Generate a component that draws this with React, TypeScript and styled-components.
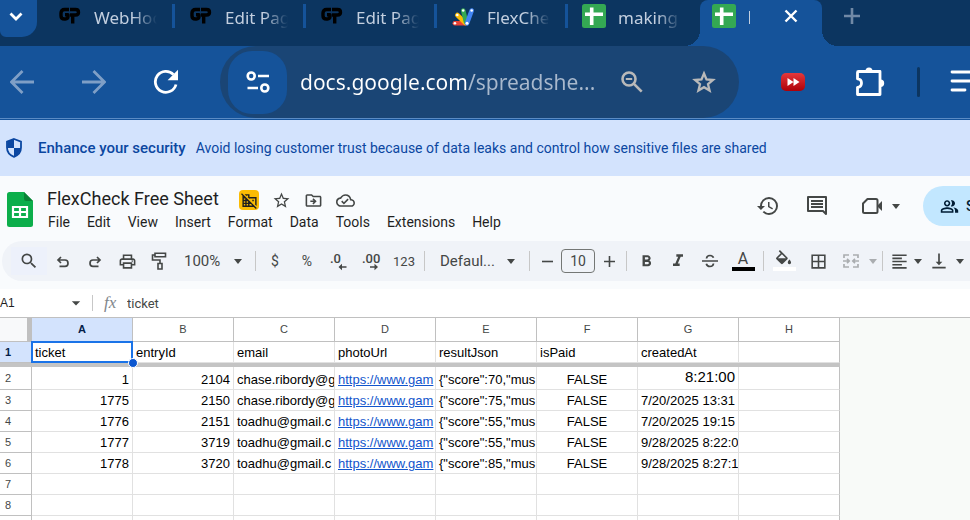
import React from 'react';
import styled, { createGlobalStyle } from 'styled-components';
import {
  MdArrowDropDown,
  MdBorderAll,
  MdDomainDisabled,
  MdFormatAlignLeft,
  MdFormatBold,
  MdFormatItalic,
  MdHistory,
  MdOutlineCloudDone,
  MdOutlineDriveFileMove,
  MdOutlinePeopleAlt,
  MdOutlinePrint,
  MdSearch,
  MdVerticalAlignBottom,
  MdStarBorder,
} from 'react-icons/md';

const GlobalStyle = createGlobalStyle`
  *, *::before, *::after { box-sizing: border-box; }
  body { margin: 0; background: #f9fbfd; }
  button, input, select { font: inherit; color: inherit; }
  button { border: 0; padding: 0; background: none; cursor: pointer; }
  svg { display: block; flex: none; }
`;

const chromeFont = '"Noto Sans", "Open Sans", sans-serif';
const appFont = 'Roboto, Arial, sans-serif';
const cellFont = '"Liberation Sans", Arial, sans-serif';

const Page = styled.div`
  display: flex;
  flex-direction: column;
  height: 100vh;
  overflow: hidden;
  font-family: ${appFont};
  color: #1f1f1f;
`;

/* ---------- Browser tabs ---------- */

const TabStrip = styled.div`
  display: flex;
  flex: none;
  height: 46px;
  background: #0c3560;
  font: 17px/24px ${chromeFont};
  color: #c3cfdf;
`;

const TabSearch = styled.button`
  display: flex;
  align-items: center;
  justify-content: flex-end;
  flex: none;
  width: 37px;
  height: 37px;
  margin-right: 7px;
  padding: 0 14px 5px 0;
  border-radius: 0 0 15px 6px;
  background: #15539a;
`;

const Tab = styled.button`
  display: flex;
  align-items: center;
  flex: none;
  gap: 12px;
  width: 131px;
  height: 32px;
  padding-left: 14px;
`;

const TabTitle = styled.span`
  flex: 1;
  overflow: hidden;
  text-align: left;
  white-space: nowrap;
  padding-top: 3px;
  mask-image: linear-gradient(to right, #000 62%, transparent 100%);
`;

const TabDivider = styled.i<{ $hidden?: boolean }>`
  width: 3px;
  height: 24px;
  margin-left: 3px;
  background: ${(p) => (p.$hidden ? 'transparent' : '#15539a')};
`;

const ActiveTab = styled.div`
  position: relative;
  display: flex;
  align-items: flex-start;
  flex: none;
  width: 122px;
  height: 46px;
  margin-left: 1px;
  padding: 4px 24px 0 12px;
  border-radius: 8px 8px 0 0;
  background: #15539a;
  &::before, &::after {
    content: '';
    position: absolute;
    bottom: 0;
    width: 16px;
    height: 16px;
  }
  &::before {
    right: 100%;
    background: radial-gradient(circle at 0 0, transparent 16px, #15539a 16px);
  }
  &::after {
    left: 100%;
    background: radial-gradient(circle at 100% 0, transparent 16px, #15539a 16px);
  }
`;

const TitleSliver = styled.i`
  width: 1px;
  height: 13px;
  margin: 7px 0 0 13px;
  background: #c3cfdf;
`;

const CloseTab = styled.button`
  margin: 5px 0 0 auto;
`;

const NewTab = styled.button`
  display: flex;
  align-items: flex-start;
  margin-left: 22px;
  padding-top: 8px;
`;

/* ---------- Browser toolbar ---------- */

const NavBar = styled.div`
  display: flex;
  align-items: center;
  flex: none;
  height: 74px;
  background: #15539a;
  border-bottom: 1px solid #15539a;
  box-shadow: inset 0 -1px 0 #5a8bc4;
  padding-bottom: 1px;
  overflow: hidden;
`;

const NavButton = styled.button<{ $w?: number; $dim?: boolean }>`
  display: flex;
  align-items: center;
  justify-content: center;
  flex: none;
  width: ${(p) => p.$w ?? 72}px;
  height: 48px;
  color: ${(p) => (p.$dim ? '#7f9fc6' : '#fff')};
`;

const Omnibox = styled.div`
  display: flex;
  align-items: center;
  flex: 1;
  min-width: 0;
  height: 72px;
  margin-left: 32px;
  padding-left: 8px;
  border-radius: 36px;
  background: #1a4575;
`;

const OmniboxIcon = styled(NavButton)`
  color: #b9b9b9;
`;

const SiteInfo = styled.button`
  display: flex;
  align-items: center;
  justify-content: center;
  flex: none;
  width: 59px;
  height: 63px;
  margin-right: 13px;
  border-radius: 24px;
  background: #15539a;
`;

const Address = styled.input`
  flex: 1;
  min-width: 0;
  padding: 0;
  border: 0;
  outline: 0;
  font: 21px/32px ${chromeFont};
  color: transparent;
  background: linear-gradient(to right, #fff 168px, #a9b9cd 168px);
  background-clip: text;
  -webkit-background-clip: text;
`;

const NavDivider = styled.i`
  flex: none;
  width: 3px;
  height: 30px;
  margin: 0 30px 0 24px;
  border-radius: 2px;
  background: #0c3560;
`;

const MediaButton = styled(NavButton)`
  justify-content: flex-start;
  overflow: hidden;
`;

/* ---------- Security banner ---------- */

const Banner = styled.div`
  display: flex;
  align-items: center;
  flex: none;
  height: 56px;
  padding-left: 6px;
  background: #d3e3fd;
  color: #0b47a1;
  font-size: 14px;
  white-space: nowrap;
`;

const BannerTitle = styled.strong`
  margin: 0 10px 0 16px;
  font-size: 15px;
  font-weight: 500;
`;

/* ---------- Document header ---------- */

const DocHeader = styled.header`
  display: flex;
  align-items: flex-start;
  flex: none;
  height: 65px;
  padding: 10px 0 0 7px;
  background: #f9fbfd;
`;

const LogoSlot = styled.div`
  flex: none;
  padding-top: 6px;
`;

const DocInfo = styled.div`
  flex: 1;
  min-width: 0;
  margin-left: 14px;
`;

const TitleRow = styled.div`
  display: flex;
  align-items: center;
  height: 25px;
  color: #444746;
`;

const DocTitle = styled.input`
  width: 178px;
  height: 26px;
  padding: 0;
  border: 0;
  background: none;
  font-size: 18px;
  color: #1f1f1f;
`;

const OrgBadge = styled.button`
  display: flex;
  align-items: center;
  justify-content: center;
  width: 20px;
  height: 20px;
  margin: 3px 6px 0 14px;
  border-radius: 4px;
  background: #fbbc04;
  color: #1f1f1f;
`;

const TitleAction = styled.button`
  display: flex;
  justify-content: center;
  width: 32px;
  padding-top: 3px;
`;

const MenuBar = styled.nav`
  display: flex;
  gap: 17px;
  padding-left: 1px;
  font-size: 14px;
  line-height: 22px;
`;

const HeaderButton = styled.button`
  display: flex;
  align-items: center;
  justify-content: center;
  flex: none;
  width: 49px;
  height: 40px;
  color: #444746;
`;

const MeetButton = styled(HeaderButton)`
  gap: 8px;
  width: 70px;
  margin-right: 12px;
  padding-left: 9px;
`;

const ShareButton = styled.button`
  display: flex;
  align-items: center;
  flex: none;
  gap: 7px;
  width: 47px;
  height: 40px;
  padding-left: 17px;
  overflow: hidden;
  border-radius: 20px 0 0 20px;
  background: #c2e7ff;
  color: #001d35;
  font-size: 14px;
  font-weight: 500;
`;

/* ---------- Formatting toolbar ---------- */

const ToolBand = styled.div`
  flex: none;
  height: 48px;
  padding-left: 2px;
  background: #f9fbfd;
`;

const ToolBar = styled.div`
  display: flex;
  align-items: center;
  height: 40px;
  padding-left: 9px;
  border-radius: 20px 0 0 20px;
  background: #f0f3f8;
  color: #444746;
  font-size: 14px;
  overflow: hidden;
`;

const Tool = styled.button<{ $w?: number; $faded?: boolean; $lit?: boolean }>`
  display: flex;
  align-items: center;
  justify-content: center;
  flex: none;
  width: ${(p) => p.$w ?? 32}px;
  height: 28px;
  opacity: ${(p) => (p.$faded ? 0.4 : 1)};
  background: ${(p) => (p.$lit ? '#edf1fb' : 'transparent')};
`;

const TextTool = styled(Tool)<{ $small?: boolean }>`
  font-size: ${(p) => (p.$small ? 13 : 14)}px;
`;

const ColorTool = styled(Tool)<{ $gap?: number }>`
  flex-direction: column;
  justify-content: flex-end;
  gap: ${(p) => p.$gap ?? 0}px;
  padding-bottom: 4px;
  line-height: 16px;
  font-size: 16px;
`;

const Swatch = styled.i<{ $color: string }>`
  width: 23px;
  height: 4px;
  background: ${(p) => p.$color};
`;

const ToolDivider = styled.i`
  flex: none;
  width: 1px;
  height: 20px;
  margin: 0 3px;
  background: #c7c7c7;
`;

const SelectWrap = styled.label<{ $w: number; $pad: number }>`
  display: flex;
  align-items: center;
  flex: none;
  width: ${(p) => p.$w}px;
  padding-left: ${(p) => p.$pad}px;
`;

const PlainSelect = styled.select<{ $w: number }>`
  appearance: none;
  flex: none;
  width: ${(p) => p.$w}px;
  padding: 0;
  border: 0;
  background: none;
  font-size: 15px;
`;

const SizeInput = styled.input`
  flex: none;
  width: 34px;
  height: 24px;
  padding: 0;
  border: 1px solid #747775;
  border-radius: 4px;
  background: none;
  text-align: center;
`;

/* ---------- Formula bar ---------- */

const FormulaRow = styled.div`
  display: flex;
  align-items: center;
  flex: none;
  height: 29px;
  border-bottom: 1px solid #c0c0c0;
  background: #fff;
  font-size: 13px;
`;

const NameBox = styled.input`
  width: 66px;
  padding: 0;
  border: 0;
  font: 12px ${cellFont};
`;

const NameMenu = styled.button`
  display: flex;
  width: 20px;
  color: #444746;
`;

const NameDivider = styled.i`
  width: 1px;
  height: 16px;
  margin: 0 11px 0 6px;
  background: #c7c7c7;
`;

const FormulaMark = styled.span`
  width: 23px;
  font: italic 17px/20px "Liberation Serif", serif;
  color: #80868b;
`;

const FormulaInput = styled.input`
  flex: 1;
  padding: 0;
  border: 0;
  color: #444746;
`;

/* ---------- Sheet ---------- */

const SheetArea = styled.main`
  flex: 1;
  min-height: 0;
  overflow: hidden;
  background: #f8faf8;
`;

const Grid = styled.table`
  table-layout: fixed;
  width: 840px;
  border-collapse: separate;
  border-spacing: 0;
  background: #fff;
  font: 13px/19px ${cellFont};
  color: #000;
`;

const RowHeadCol = styled.col`
  width: 32px;
`;

const Corner = styled.td`
  padding: 0;
  border: solid #c0c0c0;
  border-width: 0 5px 1px 0;
  background: #f8f9fa;
`;

const ColumnHead = styled.th<{ $active: boolean }>`
  height: 24px;
  padding: 0;
  border: solid #c0c0c0;
  border-width: 0 1px 1px 0;
  background: ${(p) => (p.$active ? '#d3e3fd' : '#fff')};
  font-size: 11px;
  font-weight: ${(p) => (p.$active ? 700 : 400)};
  color: ${(p) => (p.$active ? '#041e49' : '#444746')};
`;

const SheetRow = styled.tr<{ $tall?: boolean }>`
  height: ${(p) => (p.$tall ? 23 : 21)}px;
`;

const RowHead = styled.th<{ $active?: boolean }>`
  padding: 0 15px 0 0;
  border: solid #c0c0c0;
  border-width: 0 1px 1px 0;
  background: ${(p) => (p.$active ? '#d3e3fd' : '#fff')};
  font-size: 11px;
  font-weight: ${(p) => (p.$active ? 700 : 400)};
  color: ${(p) => (p.$active ? '#041e49' : '#444746')};
`;

const Cell = styled.td<{ $align?: string; $large?: boolean; $selected?: boolean }>`
  position: relative;
  padding: 0 ${(p) => (p.$align ? 3 : 0)}px 0 3px;
  border: solid #e1e1e1;
  border-width: 0 1px 1px 0;
  overflow: ${(p) => (p.$selected ? 'visible' : 'hidden')};
  text-align: ${(p) => p.$align ?? 'left'};
  vertical-align: ${(p) => (p.$large ? 'top' : 'bottom')};
  white-space: nowrap;
  font-size: ${(p) => (p.$large ? 15 : 13)}px;
  &:last-child { border-right-color: #c0c0c0; }
`;

const CellLink = styled.a`
  color: #1155cc;
`;

const Selection = styled.i`
  position: absolute;
  z-index: 1;
  inset: -1px;
  border: 2px solid #1a73e8;
  &::after {
    content: '';
    position: absolute;
    right: -7px;
    bottom: -7px;
    width: 10px;
    height: 10px;
    border: 1px solid #fff;
    border-radius: 50%;
    background: #0b57d0;
  }
`;

const FreezeBar = styled.td`
  height: 4px;
  padding: 0;
  background: #c4c4c4;
`;

/* ---------- Drawings ---------- */

const Caret = () => (
  <svg width="10" height="5" viewBox="0 0 10 5" fill="currentColor"><path d="M1 0h8L5 5z" /></svg>
);

const GpLogo = () => (
  <svg width="24" height="24" viewBox="0 0 24 24" fill="none" stroke="#000" strokeWidth="3.400" strokeLinejoin="round">
    <path d="M11 5.500H6.500Q3 5.500 3 9v2.700Q3 15 6.500 15h1q2.500 0 2.500-2.500v-1.800H7" />
    <path d="M12 5.500h5.500Q20.500 5.500 20.500 8.200T17.500 11H12" />
    <path d="M14.700 10V19.500" />
  </svg>
);

const SheetsFavicon = () => (
  <svg width="24" height="24" viewBox="0 0 24 24">
    <rect width="24" height="24" rx="2.500" fill="#34a853" />
    <path d="M9.700 3.500v17.500M3 10.300h18" stroke="#fff" strokeWidth="3.600" />
  </svg>
);

const AppsScriptIcon = () => (
  <svg width="24" height="24" viewBox="0 0 24 24" strokeLinecap="round" strokeWidth="4.600">
    <path d="M14.500 19.300H3.800" stroke="#ea4335" />
    <path d="M14.500 19 6.300 11" stroke="#fbbc04" />
    <path d="M15 18 12.200 6.500" stroke="#34a853" />
    <path d="M16 19.300 20.700 6.500" stroke="#4285f4" />
    <g fill="#fff">
      <circle cx="3.900" cy="19.300" r="1.300" />
      <circle cx="6.300" cy="11" r="1.300" />
      <circle cx="12.200" cy="6.500" r="1.300" />
      <circle cx="20.700" cy="6.500" r="1.300" />
      <circle cx="16" cy="19.300" r="1.500" />
    </g>
  </svg>
);

const ArrowIcon = ({ forward }: { forward?: boolean }) => (
  <svg width="24" height="24" viewBox="0 0 24 24" fill="none" stroke="currentColor" strokeWidth="2.800">
    <path d={forward ? 'M0 12h22.500M11.500 1l11 11-11 11' : 'M24 12H1.500M12.500 1l-11 11 11 11'} />
  </svg>
);

const ReloadIcon = () => (
  <svg width="26" height="26" viewBox="0 0 26 26" fill="none">
    <path d="M23 15.500A10.500 10.500 0 1 1 20.500 5.600" stroke="#fff" strokeWidth="2.800" />
    <path d="M25 .8v10.400H14.600z" fill="#fff" />
  </svg>
);

const TuneIcon = () => (
  <svg width="24" height="24" viewBox="0 0 24 24" fill="none" stroke="#fff" strokeWidth="2.600">
    <circle cx="5.200" cy="6" r="3.500" />
    <circle cx="18.800" cy="18" r="3.500" />
    <path d="M12 6h11M1.500 18H12" />
  </svg>
);

const ZoomOutIcon = () => (
  <svg width="22" height="22" viewBox="0 0 22 22" fill="none" stroke="currentColor" strokeWidth="2.600">
    <circle cx="8" cy="8" r="6.500" />
    <path d="M12.700 12.700l8 8" />
    <path d="M4.800 8h6.400" strokeWidth="2" />
  </svg>
);

const BookmarkIcon = () => (
  <svg width="24" height="24" viewBox="0 0 24 24" fill="none" stroke="currentColor" strokeWidth="2.300">
    <path d="M12 3.500l2.500 6 6.500.5-5 4.200 1.600 6.400L12 17.200l-5.600 3.400L8 14.200 3 10l6.500-.5z" />
  </svg>
);

const SkipIcon = () => (
  <svg width="24" height="20" viewBox="0 0 24 20">
    <defs>
      <linearGradient id="skip" x1="0" y1="0" x2="0" y2="1">
        <stop offset="0" stopColor="#e5383b" />
        <stop offset="1" stopColor="#ad0008" />
      </linearGradient>
    </defs>
    <rect y="1" width="24" height="18" rx="5" fill="url(#skip)" />
    <path d="M6.500 6v8l6-4zM12.500 6v8l6-4z" fill="#fff" />
  </svg>
);

const PuzzleIcon = () => (
  <svg width="30" height="30" viewBox="0 0 30 30">
    <path
      d="M3.500 4.500H25V27.500H2.500V20.300Q6.500 20 6.500 16T2.500 11.800V5.500q0-1 1-1z"
      fill="none" stroke="#fff" strokeWidth="2.800" strokeLinejoin="round"
    />
    <path d="M10.500 4a3.500 3.500 0 0 1 7 0zM25.500 12.500a3.700 3.700 0 0 1 0 7.400z" fill="#fff" />
  </svg>
);

const MediaListIcon = () => (
  <svg width="30" height="24" viewBox="0 0 30 24" stroke="#fff" strokeWidth="2.800" strokeLinecap="round">
    <path d="M2 2h26M2 11h26M2 20h13" />
  </svg>
);

const ShieldIcon = () => (
  <svg width="16" height="20" viewBox="0 0 16 20">
    <path d="M8 1 15 3.600v6c0 4.200-2.900 7.700-7 9.200-4.100-1.500-7-5-7-9.200v-6z" fill="#d3e3fd" stroke="#0b47a1" strokeWidth="1.800" />
    <path d="M8 1v9H1.300V3.600zM8 10h6.700c-.3 4-3 7.200-6.700 8.700z" fill="#0b47a1" />
  </svg>
);

const SheetsLogo = () => (
  <svg width="26" height="35" viewBox="0 0 26 35">
    <path d="M2.500 0H17l9 9v23.500q0 2.500-2.500 2.500h-21Q0 35 0 32.500v-30Q0 0 2.500 0z" fill="#0cae4b" />
    <path d="M17 0l9 9h-6.500Q17 9 17 6.500z" fill="#0a8236" />
    <path d="M6 15h14v10H6zM6 20h14M13 15v10" fill="none" stroke="#fff" strokeWidth="2.200" />
  </svg>
);

const CommentIcon = () => (
  <svg width="22" height="22" viewBox="0 0 22 22" fill="none" stroke="currentColor" strokeWidth="2">
    <path d="M2 2h18v17l-3-3H2z" strokeLinejoin="round" />
    <path d="M5 6h12M5 9h12M5 12h12" />
  </svg>
);

const MeetIcon = () => (
  <svg width="22" height="18" viewBox="0 0 22 18">
    <path d="M6.500 2H15q1.500 0 1.500 1.500v11q0 1.500-1.500 1.500H3.500Q2 16 2 14.500v-8z" fill="none" stroke="currentColor" strokeWidth="2" strokeLinejoin="round" />
    <path d="M16 9l5-5v10z" fill="currentColor" />
  </svg>
);

const TurnIcon = ({ redo }: { redo?: boolean }) => (
  <svg width="14" height="14" viewBox="0 0 14 14" fill="none" stroke="currentColor" strokeWidth="1.700">
    {redo ? (
      <path d="M9 3l3 3-3 3M12 6H5Q2 6 2 9.200T5 12.400h5.500" />
    ) : (
      <path d="M5 3L2 6l3 3M2 6h7q3 0 3 3.200T9 12.400H3.500" />
    )}
  </svg>
);

const RollerIcon = () => (
  <svg width="16" height="18" viewBox="0 0 16 18" fill="none" stroke="currentColor" strokeWidth="1.600">
    <path d="M4 1.300h10.500v3.500H4zM4 3H1.500v5H9v3.500M7 11.500h4V17H7z" />
  </svg>
);

const StrikeIcon = () => (
  <svg width="16" height="16" viewBox="0 0 16 16" fill="none" stroke="currentColor" strokeWidth="1.700">
    <path d="M0 8h16M4.500 5.500Q4.800 2.500 8 2.500q2.600 0 3.500 2.200M4.300 10.700Q5 13.500 8 13.500q3.200 0 3.500-3" />
  </svg>
);

const FillIcon = () => (
  <svg width="18" height="15" viewBox="2 0 21 18" fill="currentColor">
    <path d="M16.560 8.940 7.620 0 6.210 1.410l2.380 2.380-5.150 5.150a1.490 1.490 0 0 0 0 2.120l5.500 5.500c.29.29.68.44 1.060.44s.77-.15 1.060-.44l5.500-5.500c.59-.58.59-1.530 0-2.120zM5.210 10 10 5.210 14.790 10H5.210zM19 11.500s-2 2.170-2 3.500a2 2 0 0 0 4 0c0-1.330-2-3.500-2-3.500z" />
  </svg>
);

const MergeIcon = () => (
  <svg width="16" height="14" viewBox="0 0 16 14" fill="none" stroke="currentColor" strokeWidth="1.700">
    <path d="M6 1H1v3M10 1h5v3M6 13H1v-3M10 13h5v-3M0 7h6M16 7h-6M4 4.800L6.200 7 4 9.200M12 4.800L9.800 7l2.200 2.200" />
  </svg>
);

const DecimalIcon = ({ more }: { more?: boolean }) => (
  <svg width="20" height="20" viewBox="0 0 20 20" fill="currentColor">
    <text x="1" y="12" fontSize="13" fontWeight="500" fontFamily="Roboto, sans-serif">
      {more ? '.00' : '.0'}
    </text>
    {more ? (
      <path d="M9 15.200h4.500v-2.400l3.500 3.200-3.500 3.200v-2.400H9z" />
    ) : (
      <path d="M17.500 15.200H13v-2.400L9.500 16l3.500 3.200v-2.400h4.500z" />
    )}
  </svg>
);

/* ---------- Data ---------- */

const browserTabs = [
  { title: 'WebHoo', icon: <GpLogo /> },
  { title: 'Edit Pag', icon: <GpLogo /> },
  { title: 'Edit Pag', icon: <GpLogo /> },
  { title: 'FlexChe', icon: <AppsScriptIcon /> },
  { title: 'making', icon: <SheetsFavicon /> },
];

const menus = ['File', 'Edit', 'View', 'Insert', 'Format', 'Data', 'Tools', 'Extensions', 'Help'];
const columns = ['A', 'B', 'C', 'D', 'E', 'F', 'G', 'H'];
const fields = ['ticket', 'entryId', 'email', 'photoUrl', 'resultJson', 'isPaid', 'createdAt', ''];

const records = [
  { ticket: '1', entry: '2104', email: 'chase.ribordy@g', json: '{"score":70,"mus', created: '8:21:00' },
  { ticket: '1775', entry: '2150', email: 'chase.ribordy@g', json: '{"score":75,"mus', created: '7/20/2025 13:31' },
  { ticket: '1776', entry: '2151', email: 'toadhu@gmail.c', json: '{"score":55,"mus', created: '7/20/2025 19:15' },
  { ticket: '1777', entry: '3719', email: 'toadhu@gmail.c', json: '{"score":55,"mus', created: '9/28/2025 8:22:0' },
  { ticket: '1778', entry: '3720', email: 'toadhu@gmail.c', json: '{"score":85,"mus', created: '9/28/2025 8:27:1' },
];

export default function App() {
  return (
    <Page>
      <GlobalStyle />
      <TabStrip role="tablist">
        <TabSearch aria-label="Search tabs">
          <svg width="14" height="9" viewBox="0 0 14 9" fill="none" stroke="#fff" strokeWidth="2.800">
            <path d="M1.500 1.500L7 7l5.500-5.500" />
          </svg>
        </TabSearch>
        {browserTabs.map((tab, i) => (
          <Tab key={i} role="tab">
            {tab.icon}
            <TabTitle>{tab.title}</TabTitle>
            <TabDivider $hidden={i === browserTabs.length - 1} />
          </Tab>
        ))}
        <ActiveTab role="tab" aria-selected="true">
          <SheetsFavicon />
          <TitleSliver />
          <CloseTab aria-label="Close tab">
            <svg width="14" height="14" viewBox="0 0 14 14" stroke="#fff" strokeWidth="2.400">
              <path d="M1.500 1.500l11 11M12.500 1.500l-11 11" />
            </svg>
          </CloseTab>
        </ActiveTab>
        <NewTab aria-label="New tab">
          <svg width="16" height="16" viewBox="0 0 16 16" stroke="#7189a6" strokeWidth="2.600">
            <path d="M8 0v16M0 8h16" />
          </svg>
        </NewTab>
      </TabStrip>

      <NavBar>
        <NavButton $w={44} $dim aria-label="Back"><ArrowIcon /></NavButton>
        <NavButton $w={100} $dim aria-label="Forward"><ArrowIcon forward /></NavButton>
        <NavButton $w={44} aria-label="Reload"><ReloadIcon /></NavButton>
        <Omnibox>
          <SiteInfo aria-label="View site information"><TuneIcon /></SiteInfo>
          <Address aria-label="Address" defaultValue="docs.google.com/spreadshe..." />
          <OmniboxIcon $w={72} aria-label="Zoom"><ZoomOutIcon /></OmniboxIcon>
          <OmniboxIcon $w={71} aria-label="Bookmark this tab"><BookmarkIcon /></OmniboxIcon>
        </Omnibox>
        <NavButton $w={108} aria-label="Skip ads"><SkipIcon /></NavButton>
        <NavButton $w={46} aria-label="Extensions"><PuzzleIcon /></NavButton>
        <NavDivider />
        <MediaButton $w={20} aria-label="Media controls"><MediaListIcon /></MediaButton>
      </NavBar>

      <Banner>
        <ShieldIcon />
        <BannerTitle>Enhance your security</BannerTitle>
        <span>Avoid losing customer trust because of data leaks and control how sensitive files are shared</span>
      </Banner>

      <DocHeader>
        <LogoSlot><SheetsLogo /></LogoSlot>
        <DocInfo>
          <TitleRow>
            <DocTitle aria-label="Document name" defaultValue="FlexCheck Free Sheet" />
            <OrgBadge aria-label="External file"><MdDomainDisabled size={17} /></OrgBadge>
            <TitleAction aria-label="Star"><MdStarBorder size={19} /></TitleAction>
            <TitleAction aria-label="Move"><MdOutlineDriveFileMove size={19} /></TitleAction>
            <TitleAction aria-label="Saved to Drive"><MdOutlineCloudDone size={19} /></TitleAction>
          </TitleRow>
          <MenuBar>
            {menus.map((m) => <button key={m}>{m}</button>)}
          </MenuBar>
        </DocInfo>
        <HeaderButton aria-label="Version history"><MdHistory size={24} /></HeaderButton>
        <HeaderButton aria-label="Comments"><CommentIcon /></HeaderButton>
        <MeetButton aria-label="Join a call"><MeetIcon /><Caret /></MeetButton>
        <ShareButton><MdOutlinePeopleAlt size={19} />Share</ShareButton>
      </DocHeader>

      <ToolBand>
        <ToolBar role="toolbar">
          <Tool $w={36} $lit aria-label="Search menus"><MdSearch size={20} /></Tool>
          <Tool aria-label="Undo"><TurnIcon /></Tool>
          <Tool aria-label="Redo"><TurnIcon redo /></Tool>
          <Tool aria-label="Print"><MdOutlinePrint size={19} /></Tool>
          <Tool aria-label="Paint format"><RollerIcon /></Tool>
          <SelectWrap $w={77} $pad={9}>
            <PlainSelect $w={49} aria-label="Zoom"><option>100%</option></PlainSelect>
            <Caret />
          </SelectWrap>
          <ToolDivider />
          <TextTool aria-label="Currency">$</TextTool>
          <TextTool aria-label="Percent">%</TextTool>
          <Tool aria-label="Decrease decimal places"><DecimalIcon /></Tool>
          <Tool aria-label="Increase decimal places"><DecimalIcon more /></Tool>
          <TextTool $w={34} $small>123</TextTool>
          <ToolDivider />
          <SelectWrap $w={98} $pad={12}>
            <PlainSelect $w={66} aria-label="Font"><option>Defaul...</option></PlainSelect>
            <Caret />
          </SelectWrap>
          <ToolDivider />
          <Tool $w={28} aria-label="Decrease font size">
            <svg width="11" height="11" viewBox="0 0 11 11" stroke="currentColor" strokeWidth="1.600"><path d="M0 5.500h11" /></svg>
          </Tool>
          <SizeInput aria-label="Font size" defaultValue="10" />
          <Tool $w={28} aria-label="Increase font size">
            <svg width="11" height="11" viewBox="0 0 11 11" stroke="currentColor" strokeWidth="1.600"><path d="M0 5.500h11M5.500 0v11" /></svg>
          </Tool>
          <ToolDivider />
          <Tool aria-label="Bold"><MdFormatBold size={19} /></Tool>
          <Tool aria-label="Italic"><MdFormatItalic size={20} /></Tool>
          <Tool aria-label="Strikethrough"><StrikeIcon /></Tool>
          <ColorTool $w={34} aria-label="Text color">A<Swatch $color="#000" /></ColorTool>
          <ToolDivider />
          <ColorTool $w={34} $gap={2} aria-label="Fill color"><FillIcon /><Swatch $color="#fff" /></ColorTool>
          <Tool $w={34} aria-label="Borders"><MdBorderAll size={19} /></Tool>
          <Tool $w={31} $faded aria-label="Merge cells"><MergeIcon /></Tool>
          <Tool $w={13} $faded aria-label="Merge options"><Caret /></Tool>
          <ToolDivider />
          <Tool $w={26} aria-label="Horizontal align"><MdFormatAlignLeft size={19} /></Tool>
          <Tool $w={12} aria-label="Horizontal align options"><Caret /></Tool>
          <Tool $w={30} aria-label="Vertical align"><MdVerticalAlignBottom size={20} /></Tool>
          <Tool $w={12} aria-label="Vertical align options"><Caret /></Tool>
        </ToolBar>
      </ToolBand>

      <FormulaRow>
        <NameBox aria-label="Name box" defaultValue="A1" />
        <NameMenu aria-label="Named ranges"><MdArrowDropDown size={20} /></NameMenu>
        <NameDivider />
        <FormulaMark>fx</FormulaMark>
        <FormulaInput aria-label="Formula" defaultValue="ticket" />
      </FormulaRow>

      <SheetArea>
        <Grid>
          <colgroup>
            <RowHeadCol />
            {columns.map((c) => <col key={c} />)}
          </colgroup>
          <thead>
            <tr>
              <Corner />
              {columns.map((c) => <ColumnHead key={c} scope="col" $active={c === 'A'}>{c}</ColumnHead>)}
            </tr>
          </thead>
          <tbody>
            <SheetRow>
              <RowHead scope="row" $active>1</RowHead>
              {fields.map((f, i) => (
                <Cell key={i} $selected={i === 0}>{f}{i === 0 && <Selection />}</Cell>
              ))}
            </SheetRow>
            <tr><FreezeBar colSpan={9} /></tr>
            {records.map((r, i) => (
              <SheetRow key={r.entry} $tall={i === 0}>
                <RowHead scope="row">{i + 2}</RowHead>
                <Cell $align="right">{r.ticket}</Cell>
                <Cell $align="right">{r.entry}</Cell>
                <Cell>{r.email}</Cell>
                <Cell><CellLink href="#photo">https://www.gam</CellLink></Cell>
                <Cell>{r.json}</Cell>
                <Cell $align="center">FALSE</Cell>
                <Cell $align={i === 0 ? 'right' : undefined} $large={i === 0}>{r.created}</Cell>
                <Cell />
              </SheetRow>
            ))}
            {[7, 8, 9].map((n) => (
              <SheetRow key={n}>
                <RowHead scope="row">{n}</RowHead>
                {columns.map((c) => <Cell key={c} />)}
              </SheetRow>
            ))}
          </tbody>
        </Grid>
      </SheetArea>
    </Page>
  );
}
